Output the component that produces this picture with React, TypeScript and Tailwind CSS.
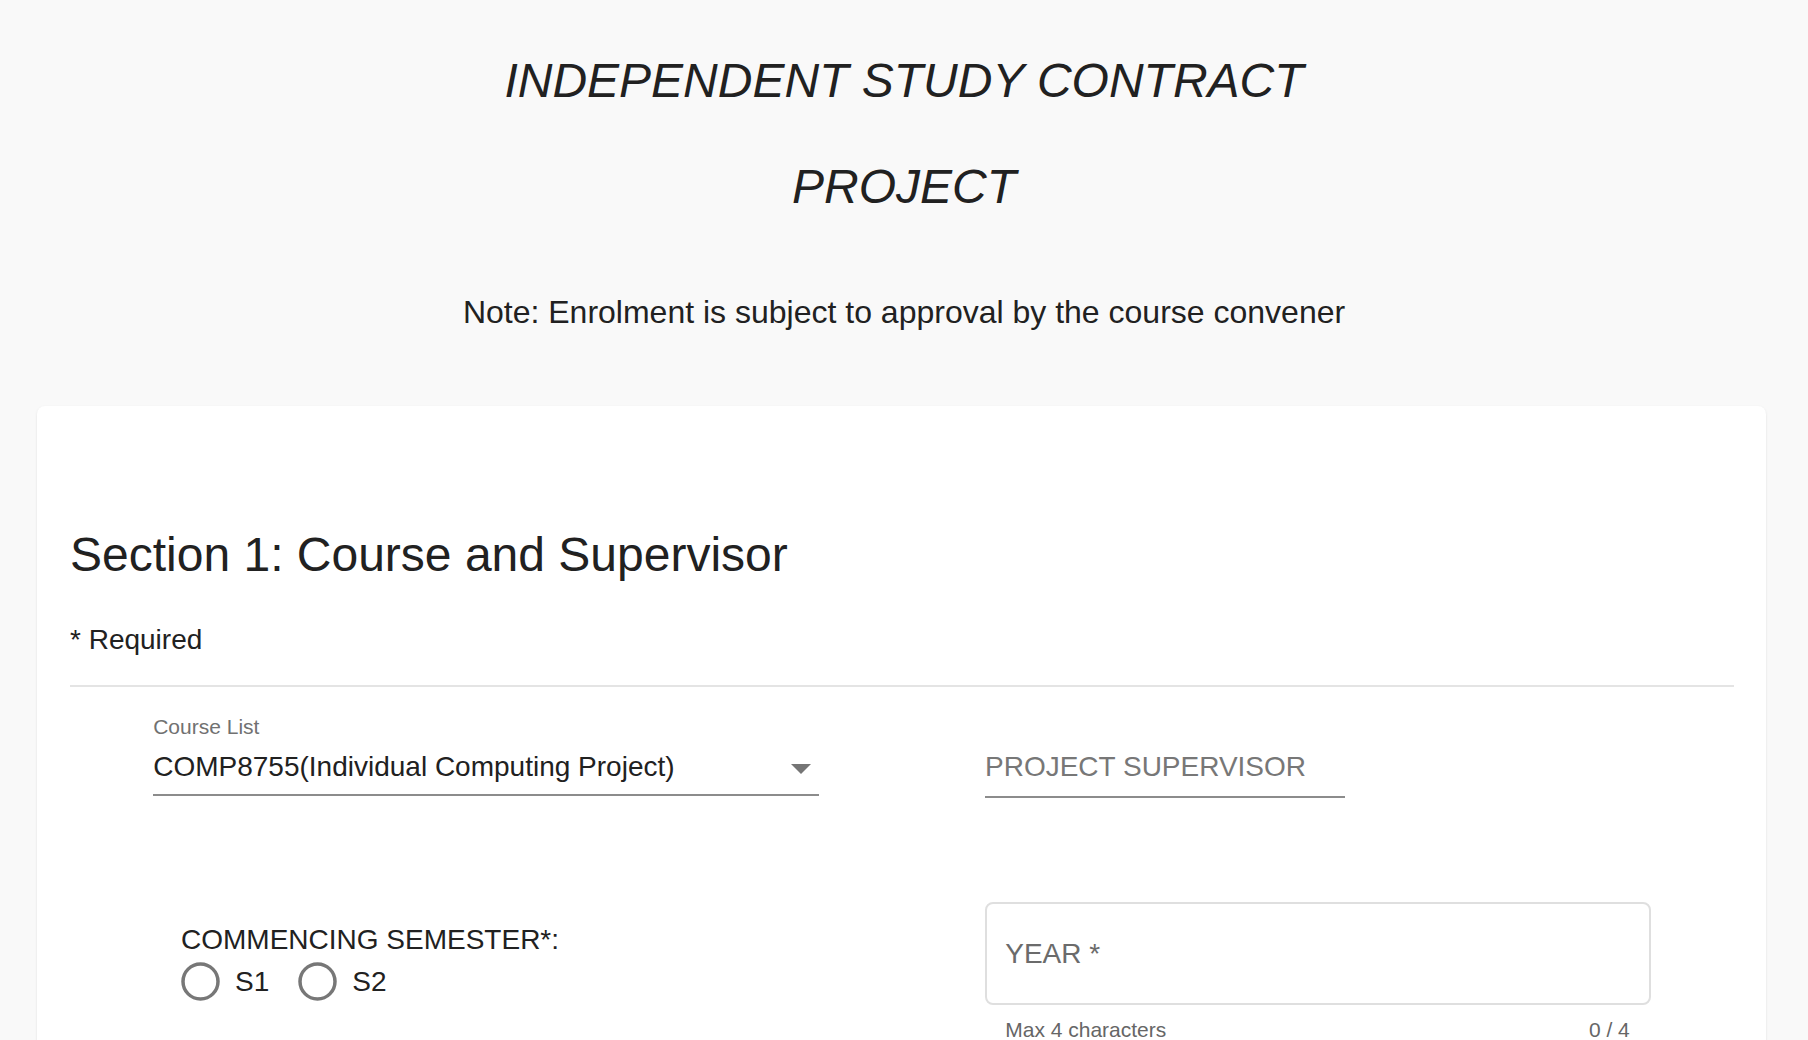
const font = { fontFamily: '"Liberation Sans", Arial, sans-serif' };

const Radio = ({ label }: { label: string }) => (
  <label className="flex items-center">
    <svg width="39" height="39" viewBox="0 0 39 39">
      <circle cx="19.5" cy="19.5" r="17.5" fill="none" stroke="#777777" strokeWidth="3.5" />
    </svg>
    <span className="ml-[15px] text-[28px] leading-none text-[#212121]">{label}</span>
  </label>
);

export default function App() {
  return (
    <div className="min-h-screen bg-[#f9f9f9] text-[#212121]" style={font}>
      <div className="flex flex-col items-center">
        <h1 className="mt-[57px] text-[48px] leading-none italic font-normal">
          INDEPENDENT STUDY CONTRACT
        </h1>
        <h2 className="mt-[58px] text-[48px] leading-none italic font-normal">PROJECT</h2>
        <p className="mt-[85px] text-[32px] leading-none">
          Note: Enrolment is subject to approval by the course convener
        </p>
      </div>

      <div className="pl-[37px] pr-[42px] mt-[78px]">
        <div className="bg-white rounded-lg shadow-[0_2px_1px_-1px_rgba(0,0,0,0.12),0_1px_1px_0_rgba(0,0,0,0.08),0_1px_3px_0_rgba(0,0,0,0.08)] pl-[33px] pr-8 pt-[125px] pb-[60px]">
          <h3 className="text-[48px] leading-none font-normal">Section 1: Course and Supervisor</h3>
          <div className="mt-[47px] text-[28px] leading-none">* Required</div>
          <div className="mt-[31px] h-[2px] bg-[#e4e4e4]" />

          <div className="grid grid-cols-2 items-start">
            <div className="w-[80%] mx-auto mt-[29px]">
              <div className="text-[21px] leading-none text-[#717171]">Course List</div>
              <div className="mt-4 flex items-center justify-between border-b-2 border-[#8c8c8c] pb-[13px] pr-2">
                <span className="text-[28px] leading-none">COMP8755(Individual Computing Project)</span>
                <svg width="20" height="10" viewBox="0 0 20 10" className="mt-1">
                  <path d="M0 0h20l-10 10z" fill="#757575" />
                </svg>
              </div>
            </div>
            <div className="pl-[83px] mt-[66px]">
              <div className="w-[360px] border-b-2 border-[#8c8c8c] pb-[13px]">
                <span className="text-[28px] leading-none text-[#777777]">PROJECT SUPERVISOR</span>
              </div>
            </div>
          </div>

          <div className="grid grid-cols-2 items-start mt-[104px]">
            <div className="pl-[111px] pt-[24px]">
              <div className="text-[28px] leading-none">COMMENCING SEMESTER*:</div>
              <div className="mt-[8px] flex items-center gap-[29px]">
                <Radio label="S1" />
                <Radio label="S2" />
              </div>
            </div>
            <div className="w-[80%] mx-auto">
              <div className="h-[103px] border-2 border-[#dfdfdf] rounded-lg flex items-center px-[18px]">
                <span className="text-[28px] leading-none text-[#6b6b6b]">YEAR *</span>
              </div>
              <div className="mt-[14px] flex justify-between pl-5 pr-[21px] text-[21px] leading-none text-[#666666]">
                <span>Max 4 characters</span>
                <span>0 / 4</span>
              </div>
            </div>
          </div>
        </div>
      </div>
    </div>
  );
}
